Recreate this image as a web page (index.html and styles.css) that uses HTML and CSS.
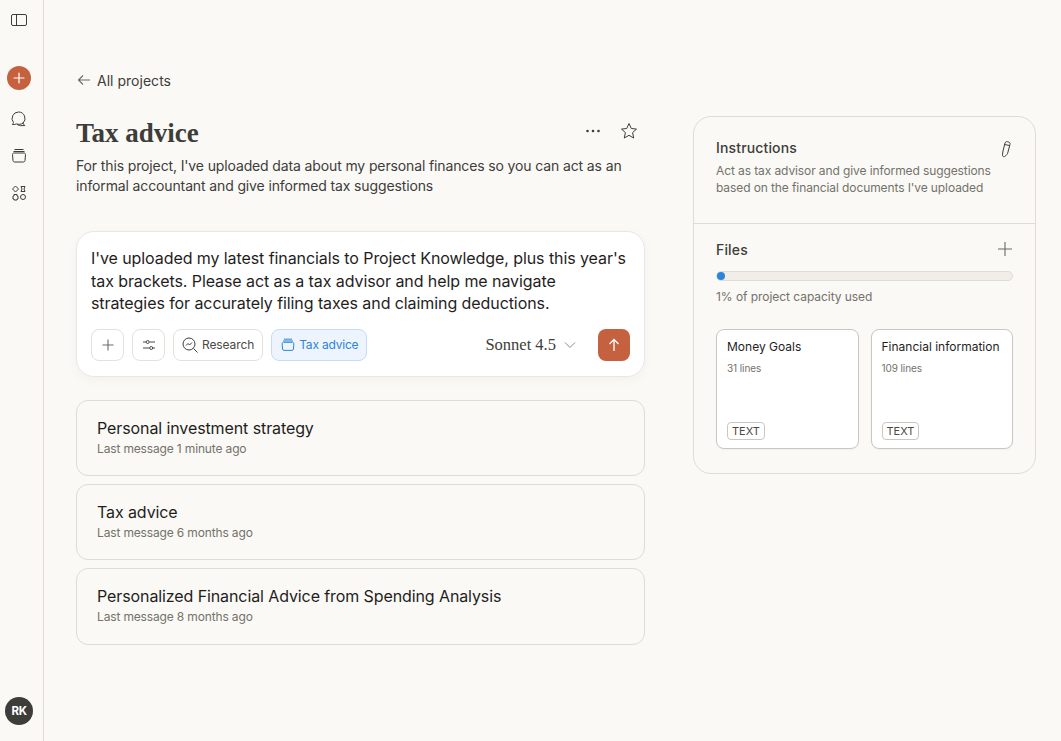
FILE: index.html
```html
<!DOCTYPE html>
<html lang="en">
<head>
<meta charset="utf-8">
<title>Tax advice</title>
<link rel="stylesheet" href="styles.css">
</head>
<body>
<div class="app">
  <nav class="rail">
    <svg class="rail-toggle" width="20" height="20" viewBox="0 0 20 20" fill="none" stroke="#3d3d3a" stroke-width="1"><rect x="2.500" y="4.500" width="15" height="11" rx="1.500"/><path d="M7.500 4.500v11"/></svg>
    <div class="new-btn"><svg width="14" height="14" viewBox="0 0 14 14" stroke="#fff" stroke-width="1.200" stroke-linecap="round"><path d="M7 2v10M2 7h10"/></svg></div>
    <div class="rail-icons">
      <svg width="20" height="20" viewBox="0 0 20 20" fill="none" stroke="#3d3d3a" stroke-width="1"><path d="M9.500 3a6.500 6.500 0 0 1 4.500 11.200c-1.900 1.300-4.500 1.500-6.500.7-1.300.7-2.900.8-4.200.6.600-.6 1-1.200 1.200-1.900A6.500 6.500 0 0 1 9.500 3z"/><path d="M14 13.500c.2 1 .7 2.100 1.800 3.100h-4.300c-1.200 0-2.500-.4-3.500-1.400"/></svg>
      <svg width="20" height="20" viewBox="0 0 20 20" fill="none" stroke="#3d3d3a" stroke-width="1"><path d="M5.500 3.500h9M4.500 5.500h11"/><path d="M3.500 8.500c0-1 .7-1.500 1.500-1.500h10c.8 0 1.500.5 1.500 1.500l-.5 6c-.1 1-.8 1.500-1.500 1.500h-9c-.7 0-1.400-.5-1.500-1.500z"/></svg>
      <svg width="20" height="20" viewBox="0 0 20 20" fill="none" stroke="#3d3d3a" stroke-width="1"><path d="M6.500 3l3 3-3 3-3-3z"/><path d="M12 3.500h4l-1 2.500 1 2.500h-4l1-2.500z"/><circle cx="14" cy="14" r="2.500"/><path d="M5 11.500h3v1.500h1v3H8v1H5v-1H4v-3h1z"/></svg>
    </div>
    <div class="avatar">RK</div>
  </nav>
  <main class="main">
    <a class="back"><svg width="16" height="16" viewBox="0 0 16 16" fill="none" stroke="#6b6a66" stroke-width="1.100"><path d="M14 8H2.500M7 3.500 2.500 8 7 12.500"/></svg>All projects</a>
    <div class="columns">
      <section class="left">
        <div class="title-row">
          <h1 class="title">Tax advice</h1>
          <div class="title-actions">
            <svg width="16" height="16" viewBox="0 0 16 16" fill="#3d3d3a"><circle cx="2.500" cy="8" r="1.300"/><circle cx="8" cy="8" r="1.300"/><circle cx="13.500" cy="8" r="1.300"/></svg>
            <svg width="18" height="18" viewBox="0 0 18 18" fill="none" stroke="#3d3d3a" stroke-width="1"><path d="M9 1.500l2.300 5 5.200.6-3.900 3.500 1.100 5.400L9 13.300 4.300 16l1.100-5.400L1.500 7.100l5.200-.6z"/></svg>
          </div>
        </div>
        <p class="desc">For this project, I've uploaded data about my personal finances so you can act as an informal accountant and give informed tax suggestions</p>
        <div class="composer">
          <p class="prompt">I've uploaded my latest financials to Project Knowledge, plus this year's tax brackets. Please act as a tax advisor and help me navigate strategies for accurately filing taxes and claiming deductions.</p>
          <div class="toolbar">
            <button class="tool square"><svg width="16" height="16" viewBox="0 0 16 16" stroke="#6b6a66" stroke-width="1.100"><path d="M8 2.500v11M2.500 8h11"/></svg></button>
            <button class="tool square"><svg width="14" height="14" viewBox="0 0 14 14" fill="none" stroke="#4a4945" stroke-width="1"><path d="M1 4h3M7.500 4H13M1 10h6.500M11 10h2"/><circle cx="5.700" cy="4" r="1.500"/><circle cx="9.200" cy="10" r="1.500"/></svg></button>
            <button class="tool research"><svg width="18" height="18" viewBox="0 0 18 18" fill="none" stroke="#3d3d3a" stroke-width="1"><circle cx="8" cy="8" r="6"/><path d="M12.500 12.500 16.500 16.500M5 9.500l2-2 1.500 1.500L11 6.500"/></svg>Research</button>
            <button class="tool active"><svg width="18" height="18" viewBox="0 0 20 20" fill="none" stroke="#2c84db" stroke-width="1.100"><path d="M5.500 3.500h9M4.500 5.500h11"/><path d="M3.500 8.500c0-1 .7-1.500 1.500-1.500h10c.8 0 1.500.5 1.500 1.500l-.5 6c-.1 1-.8 1.500-1.500 1.500h-9c-.7 0-1.400-.5-1.500-1.500z"/></svg>Tax advice</button>
            <div class="model">Sonnet 4.5<svg width="12" height="12" viewBox="0 0 12 12" fill="none" stroke="#8a8983" stroke-width="1"><path d="M1 3.500 6 8.500 11 3.500"/></svg></div>
            <button class="send"><svg width="14" height="14" viewBox="0 0 14 14" fill="none" stroke="#fff" stroke-width="1.300"><path d="M7 13V1.500M2.500 6 7 1.500 11.500 6"/></svg></button>
          </div>
        </div>
        <ul class="chats">
          <li class="chat"><div class="chat-title">Personal investment strategy</div><div class="chat-meta">Last message 1 minute ago</div></li>
          <li class="chat"><div class="chat-title">Tax advice</div><div class="chat-meta">Last message 6 months ago</div></li>
          <li class="chat"><div class="chat-title">Personalized Financial Advice from Spending Analysis</div><div class="chat-meta">Last message 8 months ago</div></li>
        </ul>
      </section>
      <aside class="panel">
        <div class="instructions">
          <div class="panel-head"><h2>Instructions</h2><svg class="pencil" width="16" height="18" viewBox="0 0 16 18" fill="none" stroke="#3d3d3a" stroke-width="1"><path d="M8 3c.3-1 1.200-1.600 2.300-1.300l1.500.4c1 .3 1.500 1.200 1.200 2.200L11 12c-.5 2-1.500 3.500-3.500 4.500-1.500.5-2-.5-2-1.500 0-1 .3-3 .5-4z"/><path d="M7.500 4.500l5 1"/></svg></div>
          <p class="panel-text">Act as tax advisor and give informed suggestions based on the financial documents I've uploaded</p>
        </div>
        <div class="files">
          <div class="panel-head"><h2>Files</h2><svg width="16" height="16" viewBox="0 0 16 16" stroke="#6b6a66" stroke-width="1.100"><path d="M8 1v14M1 8h14"/></svg></div>
          <div class="bar"><div class="bar-fill"></div></div>
          <p class="capacity">1% of project capacity used</p>
          <div class="cards">
            <div class="card"><div class="card-title">Money Goals</div><div class="card-lines">31 lines</div><span class="badge">TEXT</span></div>
            <div class="card"><div class="card-title">Financial information</div><div class="card-lines">109 lines</div><span class="badge">TEXT</span></div>
          </div>
        </div>
      </aside>
    </div>
  </main>
</div>
</body>
</html>
```
FILE: styles.css
```css
* { box-sizing: border-box; }
html, body { margin: 0; height: 100%; }
body { background: #faf9f5; color: #3d3d3a; font-family: "Inter", "Liberation Sans", sans-serif; overflow: hidden; }
p, h1, h2, ul { margin: 0; padding: 0; }
ul { list-style: none; }
button { font: inherit; cursor: pointer; }
.app { display: flex; height: 741px; }
.rail { width: 44px; flex: none; border-right: 1px solid #dedcd5; display: flex; flex-direction: column; align-items: center; padding-top: 10px; }
.rail svg { display: block; }
.rail-toggle { margin-left: -5px; }
.new-btn { width: 24px; height: 24px; border-radius: 50%; background: #c6613f; margin-top: 36px; margin-right: 5px; display: flex; align-items: center; justify-content: center; }
.rail-icons { display: flex; flex-direction: column; gap: 17px; margin-top: 19px; margin-right: 5px; }
.avatar { margin-top: auto; margin-bottom: 16px; margin-right: 5px; width: 28px; height: 28px; border-radius: 50%; background: #3d3d3a; color: #fff; font-size: 11.500px; font-weight: 700; display: flex; align-items: center; justify-content: center; letter-spacing: -0.300px; }
.main { flex: 1; padding: 72px 25px 0 32px; min-width: 0; }
.back { display: flex; align-items: center; gap: 5px; font-size: 14px; height: 16px; color: #3d3d3a; letter-spacing: .02px; }
.columns { display: flex; gap: 48px; margin-top: 20px; align-items: flex-start; }
.left { width: 569px; flex: none; }
.title-row { display: flex; justify-content: space-between; align-items: center; height: 32px; margin-top: 9px; }
.title { font-family: "Liberation Serif", serif; font-size: 27px; font-weight: 700; color: #3d3d3a; line-height: 32px; }
.title-actions { display: flex; align-items: center; gap: 19px; margin-right: 7px; margin-top: -4px; }
.title-actions svg { display: block; }
.desc { font-size: 14px; line-height: 20px; margin-top: 7px; color: #3d3d3a; max-width: 560px; letter-spacing: -.13px; }
.composer { margin-top: 35px; background: #fff; border: 1px solid #e9e7e0; border-radius: 18px; box-shadow: 0 3px 12px rgba(0,0,0,.035); padding: 15px 14px; height: 146px; }
.prompt { font-size: 16px; line-height: 22.500px; color: #1f1e1d; letter-spacing: -.08px; }
.toolbar { display: flex; align-items: center; gap: 8px; margin-top: 14px; }
.tool { height: 32px; border: 1px solid #e3e1da; background: #fff; border-radius: 8px; display: flex; align-items: center; gap: 3px; padding: 0 7px; font-size: 12px; color: #4a4945; letter-spacing: -.2px; }
.tool.square { width: 33px; padding: 0; justify-content: center; }
.tool.research { padding-right: 8px; letter-spacing: -.1px; }
.tool.active { background: #edf4fd; border-color: #c5dcf5; color: #2c84db; padding-right: 8px; gap: 2px; }
.model { margin-left: auto; font-family: "Liberation Serif", serif; font-size: 16.500px; color: #3d3d3a; display: flex; align-items: center; gap: 8px; margin-right: 22px; }
.send { width: 32px; height: 32px; border: 0; border-radius: 8px; background: #c6613f; display: flex; align-items: center; justify-content: center; margin-left: -8px; padding: 0; }
.chats { margin-top: 23px; display: flex; flex-direction: column; gap: 8px; }
.chat { height: 76px; border: 1px solid #dedcd5; border-radius: 12px; padding: 16px 20px 0; }
.chat:last-child { height: 77px; }
.chat-title { font-size: 16px; line-height: 22px; color: #1f1e1d; letter-spacing: -.1px; }
.chat-meta { font-size: 12px; line-height: 18px; color: #73726c; margin-top: 1px; letter-spacing: -.15px; }
.panel { width: 343px; flex: none; border: 1px solid #dedcd5; border-radius: 18px; margin-top: 8px; }
.instructions { height: 107px; padding: 20px 22px 0; border-bottom: 1px solid #dedcd5; }
.panel-head { display: flex; justify-content: space-between; align-items: center; height: 20px; }
.panel-head svg { display: block; }
.panel-head .pencil { margin-top: 4px; }
.panel-head h2 { font-size: 14px; font-weight: 500; color: #3d3d3a; letter-spacing: .15px; }
.panel-text { font-size: 12px; line-height: 17px; color: #73726c; margin-top: 5px; max-width: 285px; letter-spacing: -.1px; }
.files { padding: 15px 22px 24px; }
.bar { height: 10px; border: 1px solid #dedcd5; background: #f0eee6; border-radius: 5px; margin-top: 12px; position: relative; }
.bar-fill { position: absolute; left: 0; top: 0; width: 8px; height: 8px; border-radius: 50%; background: #2c84db; }
.capacity { font-size: 12px; line-height: 16px; color: #73726c; margin-top: 8px; letter-spacing: -.05px; }
.cards { display: flex; gap: 12px; margin-top: 24px; }
.card { flex: 1 1 0; min-width: 0; height: 120px; background: #fff; border: 1px solid #c9c7c0; border-radius: 8px; padding: 9px 10px 8px; display: flex; flex-direction: column; box-shadow: 0 1px 2px rgba(0,0,0,.04); }
.card-title { font-size: 12px; line-height: 16px; color: #1f1e1d; white-space: nowrap; }
.card-lines { font-size: 10px; line-height: 14px; color: #73726c; margin-top: 6px; letter-spacing: -.1px; }
.badge { margin-top: auto; align-self: flex-start; border: 1px solid #c9c7c0; border-radius: 4px; font-size: 11px; line-height: 16px; padding: 0 4px; color: #4a4945; }
```
